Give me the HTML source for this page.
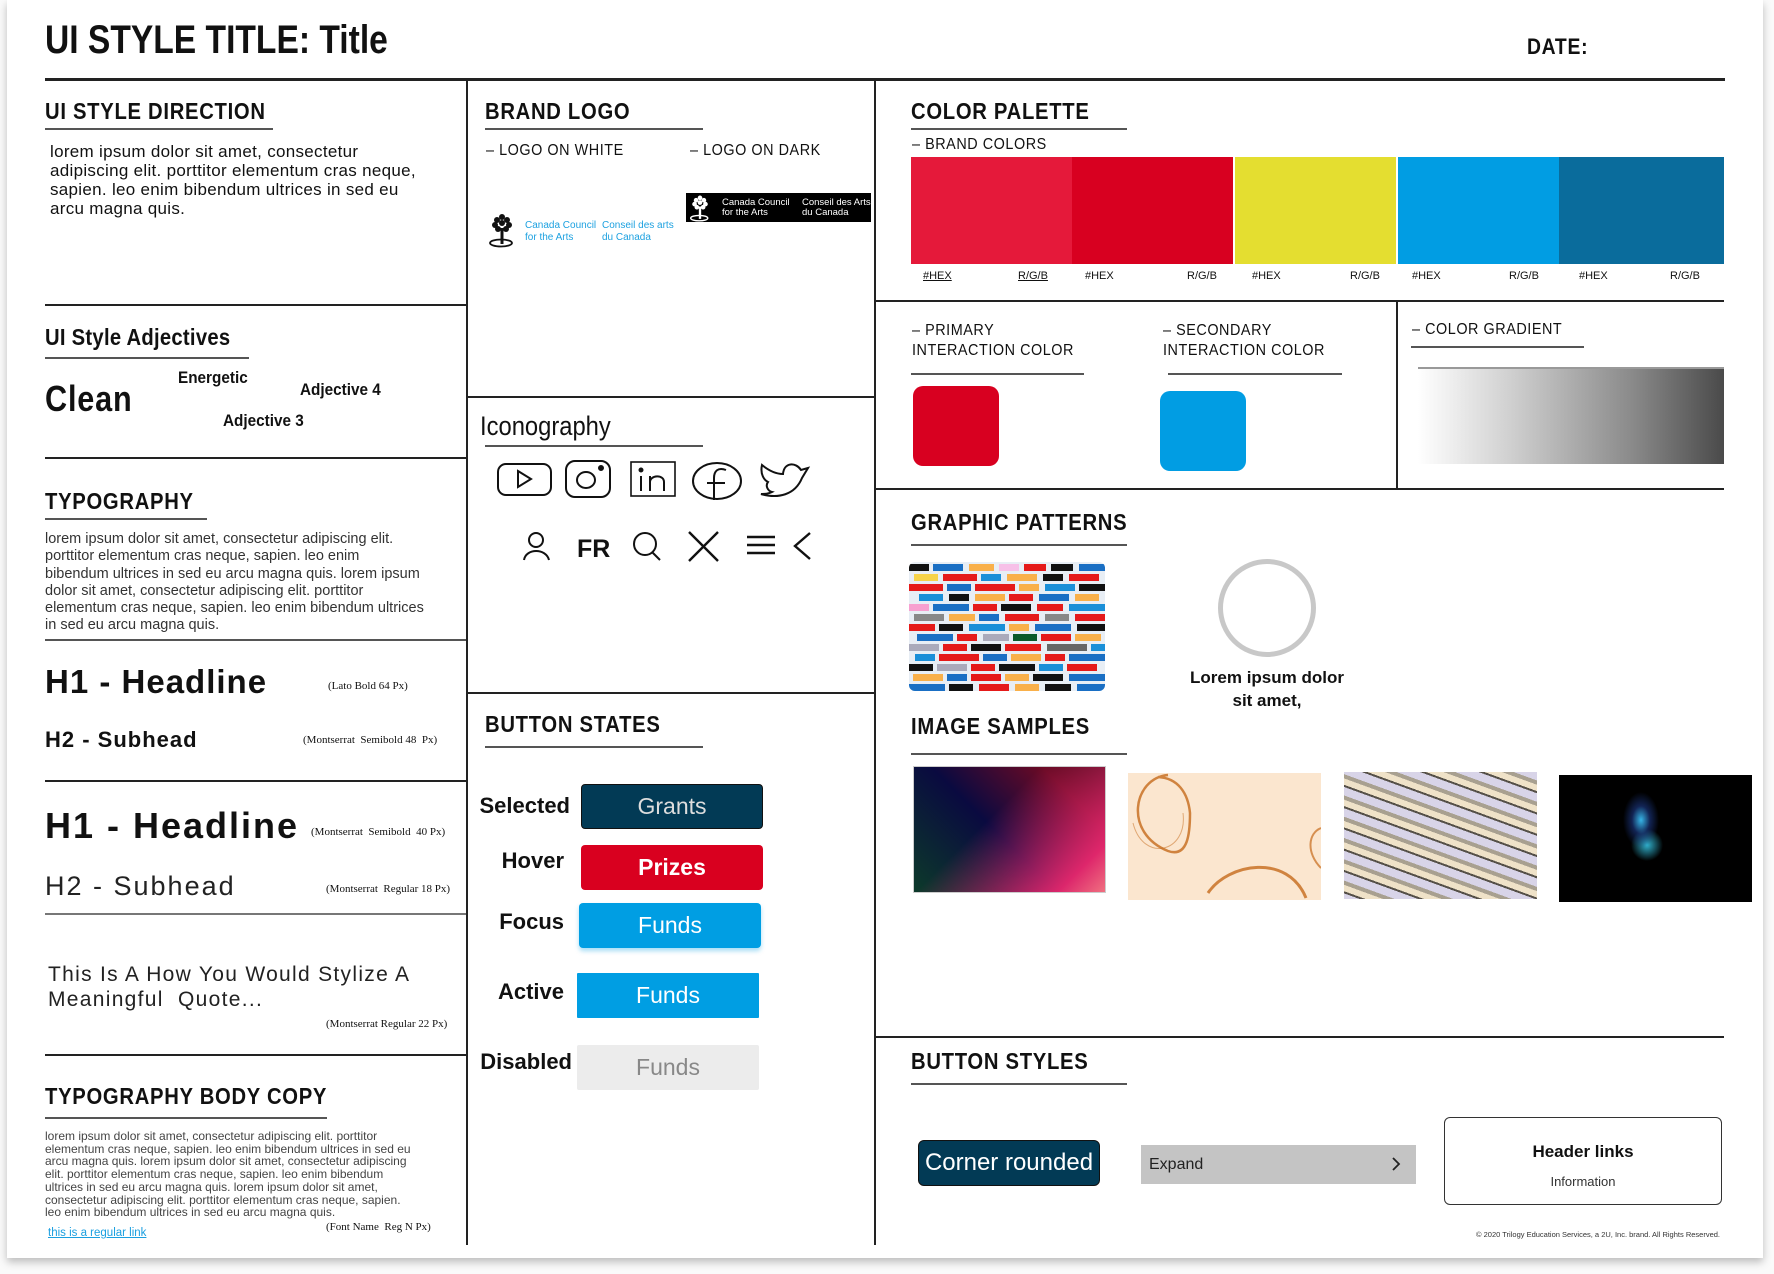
<!DOCTYPE html>
<html><head><meta charset="utf-8"><style>
*{margin:0;padding:0;box-sizing:border-box}
body{width:1774px;height:1274px;background:#fafafa;position:relative;overflow:hidden;font-family:"Liberation Sans",sans-serif;color:#111}
.page{position:absolute;left:7px;top:0;width:1756px;height:1258px;background:#fff;box-shadow:0 4px 8px rgba(0,0,0,.25)}
.a{position:absolute;white-space:nowrap}
.n{font-family:"Liberation Sans Narrow","Liberation Sans",sans-serif}
.sx{transform:scaleX(.9);transform-origin:left}
.h{font-family:"Liberation Sans Narrow","Liberation Sans",sans-serif;font-weight:bold;font-size:23px;letter-spacing:.8px;line-height:1;transform:scaleX(.88);transform-origin:left}
.hl{position:absolute;background:#222}
.ul{position:absolute;height:2px;background:#555}
.note{font-family:"Liberation Serif",serif;font-size:11px;line-height:1}
.btn{position:absolute;display:flex;align-items:center;justify-content:center;font-size:23px;border-radius:4px}
.lbl{position:absolute;width:110px;text-align:right;font-size:22px;font-weight:bold;line-height:1}
.sw{position:absolute;top:157px;height:107px}
.cl{position:absolute;top:271px;font-size:11px;line-height:1}
</style></head><body>
<div class="page"></div>

<div class="a" style="left:45px;top:20px;font-size:40px;font-weight:bold;line-height:1;transform:scaleX(.84);transform-origin:left">UI STYLE TITLE: Title</div>
<div class="a h" style="left:1527px;top:36px;font-size:22px">DATE:</div>

<!-- structural lines -->
<div class="hl" style="left:45px;top:78px;width:1680px;height:3px"></div>
<div class="hl" style="left:466px;top:79px;width:2px;height:1166px"></div>
<div class="hl" style="left:874px;top:79px;width:2px;height:1166px"></div>
<div class="hl" style="left:45px;top:304px;width:421px;height:2px"></div>
<div class="hl" style="left:45px;top:457px;width:421px;height:2px"></div>
<div class="hl" style="left:45px;top:639px;width:421px;height:2px;background:#555"></div>
<div class="hl" style="left:45px;top:780px;width:421px;height:2px"></div>
<div class="hl" style="left:45px;top:913px;width:421px;height:2px;background:#777"></div>
<div class="hl" style="left:45px;top:1054px;width:421px;height:2px"></div>
<div class="hl" style="left:466px;top:396px;width:408px;height:2px"></div>
<div class="hl" style="left:466px;top:692px;width:410px;height:2px"></div>
<div class="hl" style="left:874px;top:300px;width:850px;height:2px"></div>
<div class="hl" style="left:1396px;top:300px;width:2px;height:189px"></div>
<div class="hl" style="left:874px;top:488px;width:850px;height:2px"></div>
<div class="hl" style="left:874px;top:1036px;width:850px;height:2px"></div>

<!-- LEFT -->
<div class="a h" style="left:45px;top:100px">UI STYLE DIRECTION</div>
<div class="ul" style="left:45px;top:128px;width:228px"></div>
<div class="a n" style="left:50px;top:142px;font-size:17px;line-height:19px;letter-spacing:.3px">lorem ipsum dolor sit amet, consectetur<br>adipiscing elit. porttitor elementum cras neque,<br>sapien. leo enim bibendum ultrices in sed eu<br>arcu magna quis.</div>

<div class="a h" style="left:45px;top:326px;letter-spacing:.3px">UI Style Adjectives</div>
<div class="ul" style="left:45px;top:357px;width:204px"></div>
<div class="a n" style="left:45px;top:381px;font-size:36px;font-weight:bold;line-height:1;letter-spacing:1px;transform:scaleX(.85);transform-origin:left">Clean</div>
<div class="a n sx" style="left:178px;top:369px;font-size:17px;font-weight:bold;line-height:1">Energetic</div>
<div class="a n sx" style="left:300px;top:381px;font-size:17px;font-weight:bold;line-height:1">Adjective 4</div>
<div class="a n sx" style="left:223px;top:412px;font-size:17px;font-weight:bold;line-height:1">Adjective 3</div>

<div class="a h" style="left:45px;top:490px">TYPOGRAPHY</div>
<div class="ul" style="left:45px;top:518px;width:162px"></div>
<div class="a n" style="left:45px;top:531px;font-size:14.5px;line-height:17.3px;color:#333">lorem ipsum dolor sit amet, consectetur adipiscing elit.<br>porttitor elementum cras neque, sapien. leo enim<br>bibendum ultrices in sed eu arcu magna quis. lorem ipsum<br>dolor sit amet, consectetur adipiscing elit. porttitor<br>elementum cras neque, sapien. leo enim bibendum ultrices<br>in sed eu arcu magna quis.</div>

<div class="a" style="left:45px;top:665px;font-size:33px;font-weight:bold;line-height:1;letter-spacing:1px">H1 - Headline</div>
<div class="a note" style="left:328px;top:681px">(Lato Bold 64 Px)</div>
<div class="a" style="left:45px;top:729px;font-size:22px;font-weight:bold;line-height:1;letter-spacing:1px">H2 - Subhead</div>
<div class="a note" style="left:303px;top:735px">(Montserrat&nbsp; Semibold 48&nbsp; Px)</div>

<div class="a" style="left:45px;top:808px;font-size:36px;font-weight:bold;line-height:1;letter-spacing:2px">H1 - Headline</div>
<div class="a note" style="left:311px;top:827px">(Montserrat&nbsp; Semibold&nbsp; 40 Px)</div>
<div class="a" style="left:45px;top:873px;font-size:27px;line-height:1;letter-spacing:2px;color:#222">H2 - Subhead</div>
<div class="a note" style="left:326px;top:884px">(Montserrat&nbsp; Regular 18 Px)</div>

<div class="a" style="left:48px;top:962px;font-size:21px;line-height:25px;letter-spacing:1.3px;color:#222">This Is A How You Would Stylize A<br>Meaningful&nbsp; Quote...</div>
<div class="a note" style="left:326px;top:1019px">(Montserrat Regular 22 Px)</div>

<div class="a h" style="left:45px;top:1085px">TYPOGRAPHY BODY COPY</div>
<div class="ul" style="left:45px;top:1117px;width:282px"></div>
<div class="a n" style="left:45px;top:1130px;font-size:12px;line-height:12.7px;color:#444">lorem ipsum dolor sit amet, consectetur adipiscing elit. porttitor<br>elementum cras neque, sapien. leo enim bibendum ultrices in sed eu<br>arcu magna quis. lorem ipsum dolor sit amet, consectetur adipiscing<br>elit. porttitor elementum cras neque, sapien. leo enim bibendum<br>ultrices in sed eu arcu magna quis. lorem ipsum dolor sit amet,<br>consectetur adipiscing elit. porttitor elementum cras neque, sapien.<br>leo enim bibendum ultrices in sed eu arcu magna quis.</div>
<div class="a n" style="left:48px;top:1228px;font-size:11.5px;line-height:1;color:#1a9fe0;text-decoration:underline">this is a regular link</div>
<div class="a note" style="left:326px;top:1222px">(Font Name&nbsp; Reg N Px)</div>

<!-- MIDDLE -->
<div class="a h" style="left:485px;top:100px">BRAND LOGO</div>
<div class="ul" style="left:485px;top:128px;width:218px"></div>
<div class="a n sx" style="left:486px;top:143px;font-size:16px;line-height:1;letter-spacing:.6px">– LOGO ON WHITE</div>
<div class="a n sx" style="left:690px;top:143px;font-size:16px;line-height:1;letter-spacing:.6px">– LOGO ON DARK</div>
<svg class="a" style="left:487px;top:212px" width="30" height="36" viewBox="0 0 30 36"><g fill="#111"><circle cx="15" cy="5" r="3"/><circle cx="10" cy="8" r="3"/><circle cx="20" cy="8" r="3"/><circle cx="8" cy="13" r="3"/><circle cx="15" cy="11" r="3"/><circle cx="22" cy="13" r="3"/><circle cx="11" cy="17" r="3"/><circle cx="19" cy="17" r="3"/><rect x="13.5" y="16" width="3" height="16"/></g><ellipse cx="14" cy="31" rx="11" ry="3.5" fill="none" stroke="#111" stroke-width="1.8"/></svg>
<div class="a" style="left:525px;top:220px;font-size:10px;line-height:12px;color:#1da1e0">Canada Council<br>for the Arts</div>
<div class="a" style="left:602px;top:220px;font-size:10px;line-height:12px;color:#1da1e0">Conseil des arts<br>du Canada</div>
<div class="a" style="left:686px;top:193px;width:185px;height:29px;background:#000"></div>
<svg class="a" style="left:688px;top:194px" width="24" height="28" viewBox="0 0 30 36"><g fill="#fff"><circle cx="15" cy="5" r="3"/><circle cx="10" cy="8" r="3"/><circle cx="20" cy="8" r="3"/><circle cx="8" cy="13" r="3"/><circle cx="15" cy="11" r="3"/><circle cx="22" cy="13" r="3"/><circle cx="11" cy="17" r="3"/><circle cx="19" cy="17" r="3"/><rect x="13.5" y="16" width="3" height="16"/></g><ellipse cx="14" cy="31" rx="11" ry="3.5" fill="none" stroke="#fff" stroke-width="1.8"/></svg>
<div class="a" style="left:722px;top:198px;font-size:9.5px;line-height:10px;color:#fff">Canada Council<br>for the Arts</div>
<div class="a" style="left:802px;top:198px;font-size:9.5px;line-height:10px;color:#fff">Conseil des Arts<br>du Canada</div>

<div class="a n" style="left:480px;top:413px;font-size:27px;line-height:1;color:#111;transform:scaleX(.88);transform-origin:left">Iconography</div>
<div class="ul" style="left:485px;top:445px;width:218px"></div>
<svg class="a" style="left:490px;top:455px" width="330" height="110" viewBox="490 455 330 110" fill="none" stroke="#111" stroke-width="2">
<rect x="498" y="464" width="53" height="31" rx="8"/><path d="M518 471 L531 479 L518 487 Z"/>
<rect x="566" y="461" width="44" height="36" rx="9"/><ellipse cx="586" cy="480" rx="9" ry="8"/><circle cx="601" cy="468" r="2" fill="#111"/>
<rect x="631" y="462" width="44" height="34" stroke-width="1.6"/><circle cx="641" cy="470" r="1.5" fill="#111"/><path d="M641 476 V491 M650 491 V476 M650 482 C650 475 664 474 664 482 V491"/>
<ellipse cx="717" cy="481" rx="24" ry="18"/><path d="M726 470 C718 467 714 471 714 478 V500 M707 483 H725"/>
<path d="M808 468 L801 470 C796 462 784 462 783 474 C775 474 768 470 762 465 C760 474 764 480 768 482 C765 486 768 491 772 492 C768 494 765 494 761 494 C778 499 795 495 802 478 Z"/>
<circle cx="536" cy="540" r="7"/><path d="M524 560 C526 548 546 548 549 560"/>
<circle cx="645" cy="544" r="11"/><path d="M652 552 L660 560"/>
<path d="M689 532 L718 561 M718 532 L689 561" stroke-width="2.4"/>
<path d="M747 537 H775 M747 545 H775 M747 553 H775" stroke-width="2.6"/>
<path d="M810 533 L795 546 L810 559" stroke-width="2.4"/>
</svg>
<div class="a" style="left:577px;top:537px;font-size:25px;font-weight:bold;line-height:1">FR</div>

<div class="a h" style="left:485px;top:713px">BUTTON STATES</div>
<div class="ul" style="left:485px;top:746px;width:218px"></div>
<div class="lbl" style="left:460px;top:795px">Selected</div>
<div class="lbl" style="left:454px;top:850px">Hover</div>
<div class="lbl" style="left:454px;top:911px">Focus</div>
<div class="lbl" style="left:454px;top:981px">Active</div>
<div class="lbl" style="left:462px;top:1051px">Disabled</div>
<div class="btn" style="left:581px;top:784px;width:182px;height:45px;background:#023a55;color:#ddd;border:1px solid #111">Grants</div>
<div class="btn" style="left:581px;top:845px;width:182px;height:45px;background:#d9001f;color:#fff;font-weight:bold">Prizes</div>
<div class="btn" style="left:579px;top:903px;width:182px;height:45px;background:#009ee3;color:#fff;box-shadow:0 3px 5px rgba(0,158,227,.35)">Funds</div>
<div class="btn" style="left:577px;top:973px;width:182px;height:45px;background:#009ee3;color:#fff;border-radius:1px">Funds</div>
<div class="btn" style="left:577px;top:1045px;width:182px;height:45px;background:#ececec;color:#888;border-radius:2px">Funds</div>

<!-- RIGHT -->
<div class="a h" style="left:911px;top:100px">COLOR PALETTE</div>
<div class="ul" style="left:911px;top:128px;width:216px"></div>
<div class="a n sx" style="left:912px;top:137px;font-size:16px;line-height:1;letter-spacing:.6px">– BRAND COLORS</div>
<div class="sw" style="left:911px;width:161px;background:#e5193a"></div>
<div class="sw" style="left:1072px;width:161px;background:#d80020"></div>
<div class="sw" style="left:1235px;width:161px;background:#e4de30"></div>
<div class="sw" style="left:1398px;width:161px;background:#019de3"></div>
<div class="sw" style="left:1559px;width:165px;background:#0a6c9c"></div>
<div class="cl" style="left:923px;text-decoration:underline">#HEX</div>
<div class="cl" style="left:1018px;text-decoration:underline">R/G/B</div>
<div class="cl" style="left:1085px">#HEX</div><div class="cl" style="left:1187px">R/G/B</div>
<div class="cl" style="left:1252px">#HEX</div><div class="cl" style="left:1350px">R/G/B</div>
<div class="cl" style="left:1412px">#HEX</div><div class="cl" style="left:1509px">R/G/B</div>
<div class="cl" style="left:1579px">#HEX</div><div class="cl" style="left:1670px">R/G/B</div>

<div class="a n sx" style="left:912px;top:321px;font-size:16px;line-height:20px;letter-spacing:.6px">– PRIMARY<br>INTERACTION COLOR</div>
<div class="ul" style="left:911px;top:373px;width:173px"></div>
<div class="a n sx" style="left:1163px;top:321px;font-size:16px;line-height:20px;letter-spacing:.6px">– SECONDARY<br>INTERACTION COLOR</div>
<div class="ul" style="left:1168px;top:373px;width:174px"></div>
<div class="a" style="left:913px;top:386px;width:86px;height:80px;background:#d80020;border-radius:10px"></div>
<div class="a" style="left:1160px;top:391px;width:86px;height:80px;background:#019de3;border-radius:10px"></div>
<div class="a n sx" style="left:1412px;top:322px;font-size:16px;line-height:1;letter-spacing:.6px">– COLOR GRADIENT</div>
<div class="ul" style="left:1411px;top:346px;width:173px"></div>
<div class="a" style="left:1418px;top:367px;width:306px;height:97px;background:linear-gradient(90deg,#fff,#d0d0d0 30%,#8a8a8a 70%,#4a4a4a);border-top:2px solid #999"></div>

<div class="a h" style="left:911px;top:511px">GRAPHIC PATTERNS</div>
<div class="ul" style="left:911px;top:544px;width:216px"></div>
<svg class="a" style="left:909px;top:562px;border-radius:6px" width="196" height="129" viewBox="0 0 196 129">
<rect width="196" height="129" fill="#e8eef5"/>
<g>
<rect x="0" y="2" width="20" height="7" fill="#111"/><rect x="24" y="2" width="30" height="7" fill="#1a6fc4"/><rect x="60" y="2" width="25" height="7" fill="#f9b04a"/><rect x="90" y="2" width="20" height="7" fill="#f7c0e8"/><rect x="115" y="2" width="22" height="7" fill="#e51a1a"/><rect x="142" y="2" width="22" height="7" fill="#111"/><rect x="170" y="2" width="26" height="7" fill="#1a6fc4"/>
<rect x="5" y="12" width="24" height="7" fill="#f6d34a"/><rect x="34" y="12" width="34" height="7" fill="#e51a1a"/><rect x="72" y="12" width="20" height="7" fill="#1a8fd8"/><rect x="98" y="12" width="30" height="7" fill="#f9b04a"/><rect x="134" y="12" width="20" height="7" fill="#111"/><rect x="160" y="12" width="30" height="7" fill="#e51a1a"/>
<rect x="0" y="22" width="34" height="7" fill="#e51a1a"/><rect x="38" y="22" width="24" height="7" fill="#1a6fc4"/><rect x="66" y="22" width="40" height="7" fill="#e51a1a"/><rect x="110" y="22" width="20" height="7" fill="#f9b04a"/><rect x="136" y="22" width="30" height="7" fill="#1a8fd8"/><rect x="170" y="22" width="26" height="7" fill="#111"/>
<rect x="10" y="32" width="24" height="7" fill="#1a8fd8"/><rect x="40" y="32" width="20" height="7" fill="#111"/><rect x="66" y="32" width="30" height="7" fill="#f9b04a"/><rect x="100" y="32" width="24" height="7" fill="#e51a1a"/><rect x="130" y="32" width="30" height="7" fill="#1a6fc4"/><rect x="166" y="32" width="24" height="7" fill="#f9b04a"/>
<rect x="0" y="42" width="20" height="7" fill="#f7a0d0"/><rect x="24" y="42" width="36" height="7" fill="#1a6fc4"/><rect x="64" y="42" width="24" height="7" fill="#e51a1a"/><rect x="92" y="42" width="30" height="7" fill="#111"/><rect x="128" y="42" width="26" height="7" fill="#e51a1a"/><rect x="160" y="42" width="36" height="7" fill="#1a8fd8"/>
<rect x="5" y="52" width="30" height="7" fill="#888"/><rect x="40" y="52" width="26" height="7" fill="#f9b04a"/><rect x="70" y="52" width="20" height="7" fill="#1a6fc4"/><rect x="96" y="52" width="34" height="7" fill="#e51a1a"/><rect x="136" y="52" width="24" height="7" fill="#888"/><rect x="166" y="52" width="30" height="7" fill="#e51a1a"/>
<rect x="0" y="62" width="26" height="7" fill="#e51a1a"/><rect x="30" y="62" width="24" height="7" fill="#111"/><rect x="60" y="62" width="36" height="7" fill="#1a8fd8"/><rect x="100" y="62" width="20" height="7" fill="#f9b04a"/><rect x="126" y="62" width="36" height="7" fill="#1a6fc4"/><rect x="168" y="62" width="28" height="7" fill="#111"/>
<rect x="8" y="72" width="36" height="7" fill="#1a6fc4"/><rect x="48" y="72" width="20" height="7" fill="#e51a1a"/><rect x="74" y="72" width="26" height="7" fill="#aab"/><rect x="104" y="72" width="24" height="7" fill="#0a5a2a"/><rect x="132" y="72" width="30" height="7" fill="#e51a1a"/><rect x="166" y="72" width="26" height="7" fill="#f9b04a"/>
<rect x="0" y="82" width="30" height="7" fill="#aab"/><rect x="34" y="82" width="24" height="7" fill="#e51a1a"/><rect x="62" y="82" width="30" height="7" fill="#111"/><rect x="96" y="82" width="36" height="7" fill="#e51a1a"/><rect x="138" y="82" width="40" height="7" fill="#666"/><rect x="182" y="82" width="14" height="7" fill="#1a8fd8"/>
<rect x="6" y="92" width="20" height="7" fill="#1a8fd8"/><rect x="30" y="92" width="40" height="7" fill="#e51a1a"/><rect x="74" y="92" width="24" height="7" fill="#1a6fc4"/><rect x="102" y="92" width="30" height="7" fill="#f9b04a"/><rect x="136" y="92" width="20" height="7" fill="#e51a1a"/><rect x="160" y="92" width="36" height="7" fill="#1a6fc4"/>
<rect x="0" y="102" width="24" height="7" fill="#111"/><rect x="28" y="102" width="30" height="7" fill="#aab"/><rect x="62" y="102" width="24" height="7" fill="#e51a1a"/><rect x="90" y="102" width="36" height="7" fill="#111"/><rect x="130" y="102" width="24" height="7" fill="#1a8fd8"/><rect x="158" y="102" width="30" height="7" fill="#e51a1a"/>
<rect x="4" y="112" width="30" height="7" fill="#f9b04a"/><rect x="38" y="112" width="20" height="7" fill="#1a6fc4"/><rect x="62" y="112" width="30" height="7" fill="#e51a1a"/><rect x="96" y="112" width="24" height="7" fill="#f9b04a"/><rect x="124" y="112" width="30" height="7" fill="#111"/><rect x="160" y="112" width="36" height="7" fill="#1a6fc4"/>
<rect x="0" y="122" width="36" height="7" fill="#1a6fc4"/><rect x="40" y="122" width="24" height="7" fill="#111"/><rect x="70" y="122" width="30" height="7" fill="#e51a1a"/><rect x="106" y="122" width="24" height="7" fill="#f9b04a"/><rect x="136" y="122" width="26" height="7" fill="#111"/><rect x="168" y="122" width="28" height="7" fill="#1a6fc4"/>
</g></svg>
<div class="a" style="left:1218px;top:559px;width:98px;height:98px;border:5px solid #c8c8c8;border-radius:50%"></div>
<div class="a" style="left:1187px;top:666px;width:160px;text-align:center;font-size:17px;font-weight:bold;line-height:23px;white-space:normal">Lorem ipsum dolor sit amet,</div>

<div class="a h" style="left:911px;top:715px">IMAGE SAMPLES</div>
<div class="ul" style="left:911px;top:753px;width:216px"></div>
<div class="a" style="left:913px;top:766px;width:193px;height:127px;border:1px solid #ccc;background:linear-gradient(135deg,rgba(0,0,0,0) 40%,rgba(230,40,110,.95) 85%,#f07080),linear-gradient(45deg,#0c3a2a 0%,#0a0a40 45%,#6a0a25 80%,#4a0a1a 100%)"></div>
<svg class="a" style="left:1128px;top:773px" width="193" height="127" viewBox="0 0 193 127"><rect width="193" height="127" fill="#fbe6cf"/><g fill="none" stroke="#c66a1a"><path d="M40 2 C5 5 -5 60 40 78 C60 85 62 60 62 40 C60 20 50 5 30 4" stroke-width="2.5" opacity=".8"/><path d="M5 50 C15 90 60 80 55 40" stroke-width="1" opacity=".5"/><path d="M80 120 C100 90 160 80 178 125" stroke-width="3" opacity=".8"/><path d="M193 55 C180 60 178 80 193 95" stroke-width="2" opacity=".7"/></g></svg>
<div class="a" style="left:1344px;top:772px;width:193px;height:127px;background:repeating-linear-gradient(200deg,#d8d4e8 0 8px,#a8a090 8px 12px,#efe2c8 12px 18px,#555048 18px 20px)"></div>
<div class="a" style="left:1559px;top:775px;width:193px;height:127px;background:radial-gradient(ellipse 18px 28px at 82px 45px,rgba(60,200,255,.9),rgba(30,60,140,.6) 50%,transparent 100%),radial-gradient(ellipse 16px 16px at 88px 70px,rgba(60,220,255,.8),transparent),#000"></div>

<div class="a h" style="left:911px;top:1050px">BUTTON STYLES</div>
<div class="ul" style="left:911px;top:1083px;width:216px"></div>
<div class="btn" style="left:918px;top:1140px;width:182px;height:46px;background:#023a55;color:#fff;border:1px solid #111;border-radius:6px;font-size:24px">Corner rounded</div>
<div class="a" style="left:1141px;top:1145px;width:275px;height:39px;background:#c4c4c4"></div>
<div class="a n" style="left:1149px;top:1157px;font-size:16px;line-height:1;color:#222">Expand</div>
<svg class="a" style="left:1390px;top:1156px" width="12" height="16"><path d="M3 2 L9 8 L3 14" fill="none" stroke="#222" stroke-width="1.8"/></svg>
<div class="a" style="left:1444px;top:1117px;width:278px;height:88px;border:1.5px solid #333;border-radius:6px"></div>
<div class="a" style="left:1444px;top:1143px;width:278px;text-align:center;font-size:17px;font-weight:bold;line-height:1">Header links</div>
<div class="a" style="left:1444px;top:1175px;width:278px;text-align:center;font-size:13px;line-height:1;color:#333">Information</div>
<div class="a n" style="left:1470px;top:1231px;width:250px;text-align:right;font-size:7.5px;line-height:1;color:#333">© 2020 Trilogy Education Services, a 2U, Inc. brand. All Rights Reserved.</div>
</body></html>
